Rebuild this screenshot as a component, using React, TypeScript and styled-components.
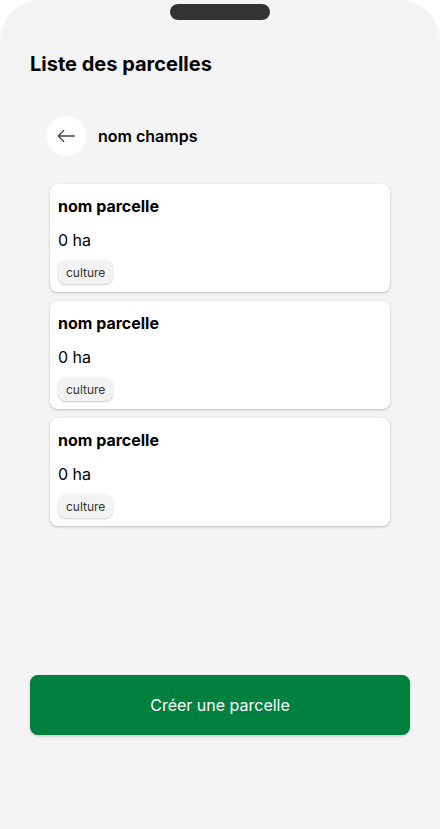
import { FC } from 'react';
import styled, { createGlobalStyle } from 'styled-components';

const GlobalStyle = createGlobalStyle`
    html, body {
        margin: 0;
        padding: 0;
        background: #ffffff;
    }
    body {
        font-family: Inter, 'Noto Sans', sans-serif;
        color: #000;
    }
`;

type Parcelle = {
    id: number;
    name: string;
    surface: number;
    culture: string;
};

const parcelles: Parcelle[] = [
    { id: 1, name: 'nom parcelle', surface: 0, culture: 'culture' },
    { id: 2, name: 'nom parcelle', surface: 0, culture: 'culture' },
    { id: 3, name: 'nom parcelle', surface: 0, culture: 'culture' },
];

const ArrowLeft: FC = () => (
    <svg width='22' height='22' viewBox='0 0 24 24' fill='none'>
        <path
            d='M21 12H3.5M9.5 6l-6 6 6 6'
            stroke='#444'
            strokeWidth='1.4'
            strokeLinecap='round'
            strokeLinejoin='round'
        />
    </svg>
);

const ParcelleCard: FC<{ parcelle: Parcelle }> = ({ parcelle }) => (
    <Card>
        <CardTitle>{parcelle.name}</CardTitle>
        <Surface>{parcelle.surface} ha</Surface>
        <div>
            <CultureTag>{parcelle.culture}</CultureTag>
        </div>
    </Card>
);

const App: FC = () => {
    return (
        <>
            <GlobalStyle />
            <Phone>
                <Notch />
                <Title>Liste des parcelles</Title>
                <FieldHeader>
                    <BackButton type='button' aria-label='retour'>
                        <ArrowLeft />
                    </BackButton>
                    <FieldName>nom champs</FieldName>
                </FieldHeader>
                <CardList>
                    {parcelles.map((p) => (
                        <ParcelleCard key={p.id} parcelle={p} />
                    ))}
                </CardList>
                <Spacer />
                <CreateButton type='button'>Créer une parcelle</CreateButton>
            </Phone>
        </>
    );
};

const Phone = styled.div`
    width: 440px;
    height: 829px;
    box-sizing: border-box;
    background: #f4f4f4;
    border-radius: 40px 40px 0 0;
    display: flex;
    flex-direction: column;
    padding: 4px 30px 94px;
`;

const Notch = styled.div`
    align-self: center;
    width: 100px;
    height: 16px;
    border-radius: 8px;
    background: #333333;
`;

const Title = styled.h1`
    margin: 29px 0 0;
    font-size: 20px;
    line-height: 30px;
    font-weight: 700;
`;

const FieldHeader = styled.div`
    display: flex;
    align-items: center;
    gap: 12px;
    margin: 37px 0 0 16px;
`;

const BackButton = styled.button`
    width: 40px;
    height: 40px;
    border-radius: 50%;
    border: none;
    background: #ffffff;
    padding: 0;
    display: flex;
    align-items: center;
    justify-content: center;
    cursor: pointer;
`;

const FieldName = styled.span`
    font-size: 16px;
    font-weight: 600;
`;

const CardList = styled.div`
    display: flex;
    flex-direction: column;
    gap: 9px;
    margin: 28px 20px 0;
`;

const Card = styled.div`
    height: 108px;
    box-sizing: border-box;
    background: #ffffff;
    border-radius: 8px;
    box-shadow: 0 1px 3px rgba(0, 0, 0, 0.22);
    padding: 10px 8px 0;
    display: flex;
    flex-direction: column;
`;

const CardTitle = styled.div`
    font-size: 16px;
    font-weight: 700;
    line-height: 24px;
`;

const Surface = styled.div`
    font-size: 16px;
    line-height: 24px;
    margin-top: 10px;
`;

const CultureTag = styled.span`
    display: inline-flex;
    align-items: center;
    height: 24px;
    margin-top: 8px;
    padding: 0 8px;
    border-radius: 8px;
    background: #f3f3f3;
    box-shadow: 0 1px 2px rgba(0, 0, 0, 0.2);
    font-size: 12px;
    color: #333333;
`;

const Spacer = styled.div`
    flex: 1;
`;

const CreateButton = styled.button`
    height: 60px;
    border: none;
    border-radius: 8px;
    background: #00803f;
    color: #ffffff;
    font-family: Inter, 'Noto Sans', sans-serif;
    font-size: 16px;
    font-weight: 400;
    box-shadow: 0 1px 3px rgba(0, 0, 0, 0.2);
    cursor: pointer;
`;

export default App;
